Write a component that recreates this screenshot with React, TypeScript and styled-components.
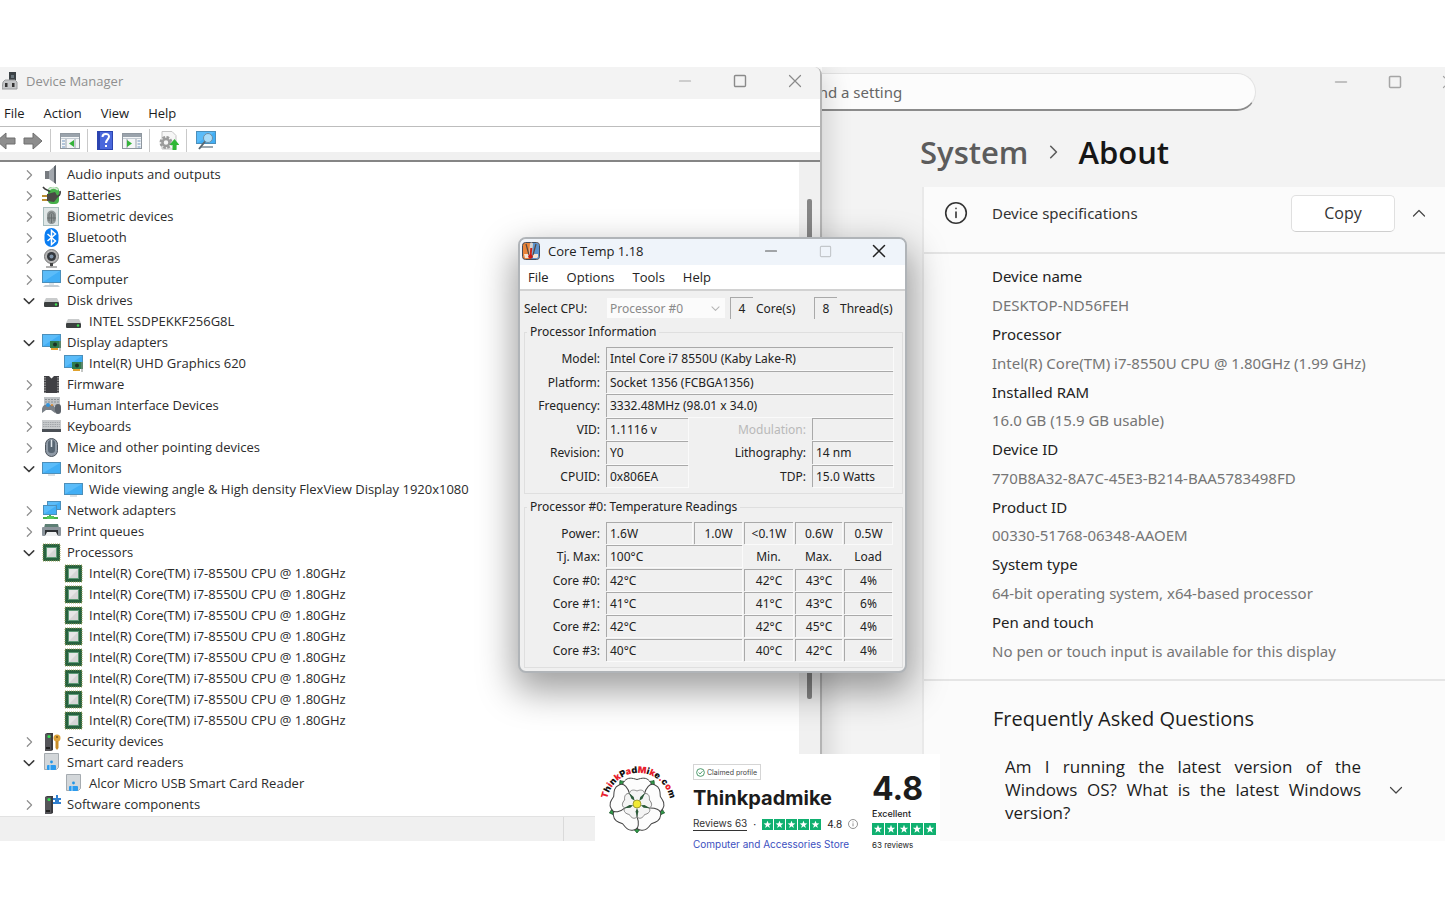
import React from "react";
import styled, { createGlobalStyle } from "styled-components";

const ui = `"Open Sans", "Noto Sans", sans-serif`;
const dialogFont = `"Noto Sans", "Open Sans", sans-serif`;
const brandFont = `Inter, "Liberation Sans", sans-serif`;

const GlobalStyle = createGlobalStyle`
  * { box-sizing: border-box; }
  body { margin: 0; background: #fff; color: #222; font-family: ${ui}; }
  button, input, select { font: inherit; color: inherit; }
  button { border: 0; padding: 0; background: none; cursor: pointer; }
  ul, dl, dd, h1, h2, h3, p, fieldset { margin: 0; padding: 0; border: 0; }
  ul { list-style: none; }
  svg { display: block; flex: none; }
`;

const Desktop = styled.main`
  position: relative;
  display: grid;
  grid-template-columns: 822fr 623fr;
  margin-top: 67px;
  padding-bottom: 67px;
`;

/* ---------- Device Manager ---------- */

const ManagerWindow = styled.section`
  position: relative;
  z-index: 1;
  display: flex;
  flex-direction: column;
  min-width: 0;
  background: #f0f0f0;
  border-right: 2px solid #b4b4b4;
  border-top-right-radius: 8px;
  box-shadow: 6px 4px 26px rgba(0, 0, 0, 0.14);
  clip-path: inset(0 -60px 0 0);
`;

const ManagerTitle = styled.header`
  display: flex;
  align-items: center;
  height: 32px;
  padding: 0 0 4px 2px;
  background: #f3f3f3;
  border-top-right-radius: 6px;
  color: #8f8f8f;
`;

const ManagerName = styled.h1`
  flex: 1;
  margin-left: 8px;
  font-size: 13px;
  font-weight: 400;
  line-height: 20px;
`;

const WindowButtons = styled.div<{ $gap: number; $end: number }>`
  display: flex;
  gap: ${(p) => p.$gap}px;
  margin-right: ${(p) => p.$end}px;
`;

const WindowButton = styled.button`
  display: grid;
  place-items: center;
  width: 16px;
  height: 16px;
`;

const ManagerMenu = styled.nav`
  display: flex;
  gap: 19px;
  height: 28px;
  padding-left: 4px;
  background: #fff;
  border-bottom: 1px solid #bdbdbd;
  font-size: 13px;
  line-height: 28px;
  color: #1c1c1c;
`;

const Toolbar = styled.div`
  display: flex;
  align-items: center;
  gap: 7px;
  height: 25px;
  padding-top: 2px;
  background: #fff;
`;

const ToolButton = styled.button<{ $width?: number }>`
  display: flex;
  align-items: center;
  justify-content: flex-end;
  width: ${(p) => p.$width ?? 20}px;
  height: 22px;
`;

const ToolDivider = styled.span`
  width: 1px;
  height: 23px;
  background: #c9c9c9;
`;

const ToolEdge = styled.div`
  height: 10px;
  background: #f0f0f0;
  border-bottom: 2px solid #858585;
`;

const TreeArea = styled.div`
  display: flex;
  background: #fff;
`;

const Tree = styled.ul`
  flex: 1;
  min-width: 0;
  padding: 2px 0 1px;
`;

const TreeRow = styled.li<{ $child?: boolean }>`
  display: flex;
  align-items: center;
  height: 21px;
  padding-left: ${(p) => (p.$child ? 64 : 22)}px;
  font-size: 13px;
  line-height: 21px;
  color: #2b2b2b;
  white-space: nowrap;
`;

const Twisty = styled.button`
  display: grid;
  place-items: center;
  width: 14px;
  height: 14px;
  margin-right: 6px;
`;

const TreeText = styled.span`
  margin-left: 5px;
`;

const ScrollTrack = styled.div`
  width: 21px;
  padding: 37px 0 0 8px;
  background: #f0f0f0;
`;

const ScrollThumb = styled.div`
  width: 5px;
  height: 500px;
  border-radius: 2px;
  background: #868686;
`;

const StatusBar = styled.footer`
  display: flex;
  height: 25px;
  border-top: 1px solid #e2e2e2;
  background: #f0f0f0;
`;

const StatusPane = styled.span`
  width: 564px;
  border-right: 1px solid #dadada;
`;

/* ---------- Settings ---------- */

const SettingsWindow = styled.section`
  display: flex;
  flex-direction: column;
  min-width: 0;
  overflow: hidden;
  background: #f3f3f3;
`;

const SettingsTop = styled.header`
  display: flex;
  align-items: flex-start;
  justify-content: space-between;
  padding-top: 6px;
`;

const SearchBox = styled.input`
  width: 494px;
  height: 38px;
  margin-left: -60px;
  padding: 1px 20px 0 44px;
  border: 1px solid #e2e2e2;
  border-bottom: 2px solid #8b8b8b;
  border-radius: 19px;
  background: #fcfcfc;
  font-family: ${dialogFont};
  font-size: 15px;
  &::placeholder { color: #666; opacity: 1; }
`;

const SettingsButtons = styled.div`
  display: flex;
  gap: 38px;
  margin: 1px -12px 0 0;
`;

const Crumbs = styled.h2`
  display: flex;
  align-items: center;
  height: 76px;
  padding: 5px 0 0 98px;
  font-size: 31px;
  font-weight: 600;
  line-height: 40px;
  color: #161616;
`;

const CrumbLink = styled.a`
  color: #5c5c5c;
  text-decoration: none;
`;

const CrumbArrow = styled.span`
  display: grid;
  place-items: center;
  width: 50px;
`;

const Card = styled.div`
  flex: 1;
  margin-left: 100px;
  border-left: 2px solid #e9e9e9;
  background: #fbfbfb;
`;

const CardHead = styled.div`
  display: flex;
  align-items: center;
  height: 67px;
  padding: 0 18px 13px 20px;
  border-bottom: 2px solid #e5e5e5;
  color: #333;
`;

const CardTitle = styled.h3`
  flex: 1;
  margin-left: 24px;
  font-family: ${dialogFont};
  font-size: 15px;
  font-weight: 400;
`;

const CopyButton = styled.button`
  width: 104px;
  height: 37px;
  margin-right: 16px;
  border: 1px solid #e0e0e0;
  border-bottom-color: #cfcfcf;
  border-radius: 5px;
  background: #fff;
  font-size: 16px;
`;

const Specs = styled.dl`
  display: grid;
  grid-auto-rows: 1fr;
  align-items: center;
  height: 403px;
  margin: 8px 0 14px;
  padding-left: 68px;
  font-family: ${dialogFont};
  font-size: 15px;
  line-height: 24px;
`;

const SpecName = styled.dt`
  color: #222;
`;

const SpecValue = styled.dd`
  color: #757575;
`;

const Faq = styled.div`
  padding: 24px 42px 13px 69px;
  border-top: 2px solid #e5e5e5;
  color: #1d1d1d;
`;

const FaqTitle = styled.h3`
  font-size: 20px;
  font-weight: 400;
  line-height: 28px;
`;

const FaqItem = styled.button`
  display: flex;
  align-items: center;
  justify-content: space-between;
  width: 100%;
  margin-top: 22px;
  padding-left: 12px;
`;

const FaqText = styled.span`
  width: 356px;
  font-size: 17px;
  line-height: 23px;
  text-align: justify;
`;

/* ---------- Core Temp ---------- */

const CoreWindow = styled.section`
  position: absolute;
  z-index: 2;
  top: 170px;
  left: 518px;
  width: 389px;
  padding-bottom: 3px;
  overflow: hidden;
  border: 2px solid #b0b4b8;
  border-radius: 8px;
  background: #f0f0f0;
  font-family: ${dialogFont};
  font-size: 12px;
  color: #222;
`;

const CoreShadow = styled.div`
  position: absolute;
  z-index: 1;
  top: 172px;
  left: 520px;
  width: 385px;
  height: 430px;
  border-radius: 8px;
  box-shadow: 0 16px 36px 6px rgba(0, 0, 0, 0.38);
`;

const CoreTitle = styled.header`
  display: flex;
  align-items: center;
  height: 26px;
  padding: 0 0 2px 2px;
  background: #eff4fa;
  font-family: ${ui};
`;

const CoreName = styled.h2`
  flex: 1;
  margin-left: 8px;
  font-size: 13px;
  font-weight: 400;
`;

const CoreMenu = styled.nav`
  display: flex;
  gap: 18px;
  height: 26px;
  padding-left: 8px;
  border-bottom: 2px solid #d2d2d2;
  background: #fff;
  font-family: ${ui};
  font-size: 13px;
  line-height: 25px;
`;

const CpuRow = styled.div`
  display: flex;
  align-items: center;
  height: 22px;
  margin: 6px 0 0 4px;
`;

const SelectWrap = styled.div`
  display: flex;
  align-items: center;
  width: 118px;
  height: 20px;
  margin: 0 5px 0 auto;
  padding-right: 5px;
  background: #fbfbfb;
`;

const CpuSelect = styled.select`
  flex: 1;
  min-width: 0;
  height: 20px;
  padding: 0 0 0 3px;
  border: 0;
  appearance: none;
  background: transparent;
  color: #8a8a8a;
  opacity: 1;
`;

const Count = styled.output`
  width: 23px;
  height: 22px;
  border: solid #a9a9a9;
  border-width: 1px 0 0 1px;
  line-height: 21px;
  text-align: center;
`;

const CountLabel = styled.span<{ $width: number }>`
  width: ${(p) => p.$width}px;
  padding-left: 3px;
  white-space: nowrap;
`;

const Group = styled.fieldset`
  min-width: 0;
  margin: 4px 2px 0 4px;
  border: 1px solid #dfdfdf;
`;

const GroupName = styled.legend`
  margin-left: 2px;
  padding: 0 3px;
  font-size: 12px;
  line-height: 18px;
`;

const InfoGrid = styled.dl`
  display: grid;
  grid-template-columns: 75px 82px 1fr 81px;
  grid-auto-rows: 1fr;
  column-gap: 6px;
  height: 141px;
  margin: 6px 9px 5px 0;
`;

const InfoLabel = styled.dt<{ $muted?: boolean }>`
  line-height: 23px;
  text-align: right;
  color: ${(p) => (p.$muted ? "#b9b9b9" : "#222")};
`;

const InfoValue = styled.dd<{ $wide?: boolean }>`
  grid-column: ${(p) => (p.$wide ? "span 3" : "span 1")};
  margin-bottom: 1px;
  padding-left: 3px;
  border: solid #a9a9a9;
  border-width: 1px 0 0 1px;
  box-shadow: 1px 1px 0 #fafafa;
  line-height: 21px;
`;

const Readings = styled.table`
  width: 369px;
  height: 140px;
  margin: 6px 0 5px;
  border-collapse: separate;
  border-spacing: 0;
  table-layout: fixed;
`;

const RowName = styled.th`
  padding: 0 6px 0 0;
  font-weight: 400;
  text-align: right;
`;

const ColumnName = styled.th`
  padding: 0 2px 0 0;
  font-weight: 400;
`;

const Cell = styled.td<{ $left?: boolean }>`
  padding: 0 2px 1px 0;
  text-align: ${(p) => (p.$left ? "left" : "center")};
`;

const Sunken = styled.div<{ $left?: boolean }>`
  height: 22px;
  padding-left: ${(p) => (p.$left ? 3 : 0)}px;
  border: solid #a9a9a9;
  border-width: 1px 0 0 1px;
  box-shadow: 1px 1px 0 #fafafa;
  line-height: 22px;
`;

/* ---------- Review badge ---------- */

const Review = styled.aside`
  position: absolute;
  z-index: 3;
  top: 687px;
  left: 595px;
  display: flex;
  width: 345px;
  height: 110px;
  background: #fff;
  font-family: ${brandFont};
  color: #1c1c1c;
`;

const ReviewMain = styled.div`
  display: flex;
  flex-direction: column;
  align-items: flex-start;
  width: 179px;
  margin-left: 8px;
  padding-top: 10px;
`;

const Claimed = styled.span`
  display: flex;
  align-items: center;
  gap: 2px;
  height: 16px;
  padding: 0 3px 0 2px;
  border: 1px solid #d5d5d5;
  font-size: 7px;
  color: #444;
`;

const Shop = styled.h2`
  margin-top: 5px;
  font-size: 20px;
  font-weight: 700;
  line-height: 26px;
`;

const ScoreLine = styled.div`
  display: flex;
  align-items: center;
  gap: 6px;
  height: 18px;
  margin-top: 4px;
  font-size: 10px;
`;

const ReviewLink = styled.a`
  border-bottom: 1px solid #333;
  color: #333;
  line-height: 13px;
  text-decoration: none;
`;

const StoreLink = styled.a`
  margin-top: 4px;
  color: #3c50c0;
  font-size: 10px;
  line-height: 14px;
  text-decoration: none;
  white-space: nowrap;
`;

const ReviewSide = styled.div`
  display: flex;
  flex-direction: column;
  padding-top: 16px;
  font-size: 9px;
  line-height: 12px;
`;

const BigScore = styled.strong`
  font-size: 32px;
  line-height: 38px;
`;

const Verdict = styled.span`
  font-weight: 500;
`;

const SmallNote = styled.span`
  margin-top: 4px;
  font-size: 8px;
`;

const Stars = styled.div<{ $top: number }>`
  display: flex;
  gap: 1px;
  margin-top: ${(p) => p.$top}px;
`;

/* ---------- Drawings ---------- */

type StrokeProps = { d: string; color: string; w?: number; size?: number };

const Stroke = ({ d, color, w = 1.2, size = 14 }: StrokeProps) => (
  <svg width={size} height={size} viewBox="0 0 14 14" fill="none" stroke={color} strokeWidth={w} strokeLinecap="round" strokeLinejoin="round">
    <path d={d} />
  </svg>
);

const MINIMIZE = "M1.5 7h11";
const MAXIMIZE = "M2.5 1.5h9a1 1 0 0 1 1 1v9a1 1 0 0 1-1 1h-9a1 1 0 0 1-1-1v-9a1 1 0 0 1 1-1z";
const CLOSE = "M1.5 1.5l11 11M12.5 1.5l-11 11";
const UP = "M1.5 10L7 4.5 12.5 10";
const DOWN = "M1.5 4.5L7 10l5.5-5.5";
const RIGHT = "M5 2l5 5-5 5";

const Screen = ({ x = 0, y = 0, w = 19, h = 13 }: { x?: number; y?: number; w?: number; h?: number }) => (
  <g>
    <rect x={x} y={y} width={w} height={h} fill="#4c8fba" />
    <rect x={x + 1} y={y + 1} width={w - 2} height={h - 2} fill="#41aef5" />
    <path d={`M${x + 1} ${y + h - 1}V${y + 1}h${w - 2}z`} fill="#5bbcf9" />
  </g>
);

const Tower = () => (
  <g>
    <path d="M3 2l2-1h6v17l-2 1H3z" fill="#3b3b3f" />
    <path d="M3 2h6v17H3z" fill="#55555a" />
    <rect x="4" y="15" width="4" height="2" fill="#222" />
    <circle cx="7" cy="4.5" r="1.6" fill="#37e052" />
  </g>
);

const art: Record<string, React.ReactNode> = {
  audio: (
    <g>
      <path d="M3 6h5v8H3z" fill="#777b80" />
      <path d="M7 6l7-6v19l-7-5z" fill="#a3a8ae" />
      <path d="M12 1.600L14 0v19l-2-1.600z" fill="#5f656c" />
    </g>
  ),
  battery: (
    <g>
      <rect x="6" y="1" width="11" height="17" rx="4" fill="#46b04a" />
      <path d="M7 4c2-3 7-3 9 0" stroke="#cfe9cf" strokeWidth="2" fill="none" />
      <path d="M1 1c3 4 5 2 7 5M18 5c1 5-3 6-6 6" stroke="#3d3d3d" strokeWidth="1.600" fill="none" />
      <path d="M5 8l8-2 3 5-4 5-7-1z" fill="#4a4a46" />
      <path d="M0 10h5M0 14h5" stroke="#b98d2f" strokeWidth="2" />
    </g>
  ),
  finger: (
    <g>
      <rect x="1.500" y="0.500" width="15" height="18" fill="#dfe6e6" stroke="#a7bcbc" />
      <path d="M5 8c0-6 9-6 9 0v4c0 3-2 5-4.500 5S5 15 5 12z" fill="#8f9696" />
      <path d="M7 14V8c0-3 5-3 5 0v6M9.500 7v9M5 11h9" stroke="#5f6767" strokeWidth=".8" fill="none" />
    </g>
  ),
  bluetooth: (
    <g>
      <rect x="2.500" y="0" width="14" height="19" rx="7" fill="#0a7df2" />
      <path d="M5.500 6l8 7-4 3.500V2.500l4 3.500-8 7" fill="none" stroke="#fff" strokeWidth="1.500" />
    </g>
  ),
  camera: (
    <g>
      <path d="M4 18h11M9.500 14v4" stroke="#999" strokeWidth="1.600" />
      <circle cx="9.500" cy="7.500" r="7" fill="#b4b4b4" stroke="#767676" />
      <circle cx="9.500" cy="7.500" r="4.500" fill="#34383d" />
      <circle cx="9.500" cy="7.500" r="2" fill="#7e93a9" />
      <rect x="8" y="14" width="3" height="3" fill="#444" />
    </g>
  ),
  computer: (
    <g>
      <Screen y={0} />
      <path d="M1 17l2-2h13l2 2z" fill="#c3cdd4" />
      <path d="M7 13h5v2H7z" fill="#dbe3e8" />
    </g>
  ),
  disk: (
    <g>
      <path d="M4 7h11l2 4H2z" fill="#c9cbcc" />
      <rect x="2" y="11" width="15" height="5" rx="1" fill="#3c4040" />
      <circle cx="14" cy="13.500" r="1.200" fill="#3de04f" />
    </g>
  ),
  display: (
    <g>
      <Screen y={1} />
      <rect x="8" y="8" width="11" height="7" fill="#2f7d4d" />
      <circle cx="13" cy="11.500" r="2" fill="#1c3326" />
      <path d="M9 15h7v2H9z" fill="#e0a22e" />
      <path d="M18 8v10" stroke="#8a8f8c" />
    </g>
  ),
  firmware: (
    <g>
      <path d="M2 1h5l2.500 2.500L12 1h5v17H2z" fill="#404044" />
      <path d="M3 2v16M16 2v16" stroke="#9c9c9c" strokeWidth="1.500" strokeDasharray="1.500 1" />
    </g>
  ),
  hid: (
    <g>
      <rect x="2" y="1" width="16" height="9" fill="#bfc3c6" />
      <path d="M3 3.500h14M3 6h14" stroke="#8b9094" strokeDasharray="2 1" />
      <path d="M0 17c-1-6 2-9 5-8h5c3 0 4 4 3 8l-4-3H4z" fill="#7a8087" />
      <circle cx="6" cy="9" r="2" fill="#3394dc" />
      <rect x="13" y="8" width="6" height="10" rx="3" fill="#5c626a" />
      <circle cx="10" cy="9" r="1" fill="#e28b2b" />
    </g>
  ),
  keyboard: (
    <g>
      <rect x="0" y="3" width="19" height="9" fill="#c8cbcd" />
      <path d="M1 5.500h17M1 7.500h17M1 9.500h17" stroke="#a2a6aa" strokeDasharray="1.500 .8" />
      <rect x="0" y="12" width="19" height="3" fill="#4a4f55" />
    </g>
  ),
  mouse: (
    <g>
      <rect x="3.500" y="0.500" width="12" height="18" rx="6" fill="#8f9aa6" stroke="#4c545d" />
      <rect x="6" y="2" width="7" height="13" rx="3" fill="#586673" />
      <path d="M9.500 2v7" stroke="#dfe5ea" strokeWidth="1.500" />
    </g>
  ),
  monitor: (
    <g>
      <Screen y={3} h={12} />
      <path d="M6 16h7" stroke="#b9c3c9" />
    </g>
  ),
  network: (
    <g>
      <Screen x={5} y={0} w={14} h={9} />
      <Screen x={1} y={4} w={14} h={10} />
      <path d="M8 14v2M1 17h15" stroke="#46b04a" strokeWidth="2" />
      <path d="M5 15h7v3H5z" fill="#55c658" />
    </g>
  ),
  printer: (
    <g>
      <path d="M3 2h13l1 4H2z" fill="#5d7f74" />
      <rect x="0" y="5" width="19" height="9" rx="1" fill="#8c959c" />
      <rect x="3" y="8" width="13" height="5" fill="#2c3033" />
      <path d="M5 10h9l2 4H3z" fill="#eef0f1" />
    </g>
  ),
  cpu: (
    <g>
      <rect x="1" y="1" width="17" height="17" fill="#27623f" stroke="#a0a35e" strokeDasharray="1 1" />
      <rect x="4.500" y="4.500" width="10" height="10" fill="#e6e6e6" stroke="#5e9a76" />
      <path d="M5 14L14 5v9z" fill="#d6d6d6" />
    </g>
  ),
  security: (
    <g>
      <Tower />
      <circle cx="15" cy="6" r="3.500" fill="#dca23a" />
      <path d="M13.500 9h3v7l-1.500 2-1.500-2z" fill="#c98d27" />
      <circle cx="15" cy="5" r="1" fill="#7c5515" />
    </g>
  ),
  card: (
    <g>
      <path d="M2.500 .5h14v14l-2 2h-12z" fill="#d3d7da" stroke="#a5abb0" />
      <circle cx="9.500" cy="9" r="1.400" fill="#2196e8" />
      <rect x="5" y="12" width="9" height="5" rx="1" fill="#2b9bee" />
      <path d="M8 12v5" stroke="#bfe1fa" />
    </g>
  ),
  software: (
    <g>
      <Tower />
      <path d="M11 3h3V0h2v3h3v2h-2v2h2v2h-8V7h2V5h-2z" fill="#2f7fd0" />
    </g>
  ),
};

const TreeIcon = ({ name }: { name: string }) => (
  <svg width="20" height="19" viewBox="0 0 20 19" aria-hidden="true">{art[name]}</svg>
);

const Arrow = ({ flip }: { flip?: boolean }) => (
  <svg width="20" height="18" viewBox="0 0 20 18">
    <path d={flip ? "M19 6H10V1L1 9l9 8v-5h9z" : "M1 6h9V1l9 8-9 8v-5H1z"} fill="#8d8d8d" stroke="#6f6f6f" />
  </svg>
);

const PaneIcon = ({ right }: { right?: boolean }) => (
  <svg width="20" height="18" viewBox="0 0 20 18">
    <rect x=".5" y="1.500" width="19" height="15" fill="#f4f6f7" stroke="#8f979f" />
    <path d="M1 3.500h18" stroke="#9aa3ac" strokeWidth="3" />
    <path d="M1 6.500h18" stroke="#c2cad2" />
    {right ? (
      <g>
        <path d="M5 7v9M14 7v9" stroke="#9aa3ac" />
        <path d="M15.500 9h3M15.500 12h3M15.500 15h3" stroke="#6f93bd" />
        <path d="M5 8l5 3.500L5 15z" fill="#35b33a" />
      </g>
    ) : (
      <g>
        <path d="M6 7v9M15 7v9" stroke="#9aa3ac" />
        <path d="M2 9h3M2 12h3M2 15h3" stroke="#6f93bd" />
        <path d="M14 8l-5 3.500 5 3.500z" fill="#35b33a" />
      </g>
    )}
  </svg>
);

const HelpIcon = () => (
  <svg width="18" height="20" viewBox="0 0 18 20">
    <rect width="16" height="19" fill="#2b44b0" />
    <rect x="3" y="1" width="12" height="17" fill="#4a68dc" />
    <path d="M5.500 6c0-4 6.500-4 6.500-.5C12 8.500 9 8.500 9 12M9 14v2" fill="none" stroke="#fff" strokeWidth="2" />
  </svg>
);

const UpdateIcon = () => (
  <svg width="20" height="20" viewBox="0 0 20 20">
    <path d="M3 .5h10l4 4V18H3z" fill="#f6f6f6" stroke="#c4c4c4" />
    <circle cx="7" cy="11.500" r="5" fill="none" stroke="#9b9b9b" strokeWidth="3" strokeDasharray="2.600 1.300" />
    <circle cx="7" cy="11.500" r="3.500" fill="none" stroke="#9b9b9b" strokeWidth="2.500" />
    <path d="M15.500 8l5 6h-3v5h-4v-5h-3z" fill="#2fb735" />
  </svg>
);

const ScanIcon = () => (
  <svg width="20" height="19" viewBox="0 0 20 19">
    <Screen w={20} h={13} />
    <path d="M4 16h13" stroke="#9ba7af" strokeWidth="2" />
    <circle cx="12" cy="7" r="4.500" fill="#a9dcf8" stroke="#6f8ea3" />
    <path d="M9 10.500L3 18" stroke="#5a6770" strokeWidth="2" />
  </svg>
);

const ManagerIcon = () => (
  <svg width="16" height="18" viewBox="0 0 16 18">
    <rect x="7" y="0" width="7" height="9" fill="#3c4246" />
    <rect x="9" y="3" width="3" height="3" fill="#69757c" />
    <path d="M1 10l2-2h10l2 2v7H0z" fill="#c4c6c8" stroke="#9a9c9e" />
    <rect x="3" y="11" width="2.500" height="4" fill="#333" />
    <rect x="10" y="11" width="2.500" height="4" fill="#333" />
  </svg>
);

const CoreIcon = () => (
  <svg width="18" height="18" viewBox="0 0 18 18">
    <rect x=".5" y=".5" width="17" height="17" rx="3" fill="#e8843a" stroke="#444b59" />
    <path d="M9 1h6a2 2 0 0 1 2 2v12a2 2 0 0 1-2 2H9z" fill="#5b93cf" />
    <path d="M2 12h5v4H3zM11 12h5v3l-1 1h-4z" fill="#f4e3d3" />
    <path d="M4 2l3 11M14 2l-3 11" stroke="#59493f" strokeWidth="1.200" />
    <path d="M9.500 2l-1 11" stroke="#d5d2cf" strokeWidth="3" strokeLinecap="round" />
    <path d="M9.300 6l-.8 8" stroke="#cc2218" strokeWidth="2" />
    <circle cx="8.500" cy="14.500" r="2.300" fill="#c81c14" />
  </svg>
);

const StarRow = ({ size, top = 0 }: { size: number; top?: number }) => (
  <Stars $top={top} role="img" aria-label="Rated 4.8 out of 5">
    {[0, 1, 2, 3, 4].map((n) => (
      <svg key={n} width={size} height={size} viewBox="0 0 12 12">
        <rect width="12" height="12" fill="#10b070" />
        <path d="M6 1.800l1.100 2.900 3.100.1-2.500 1.900.9 3L6 8l-2.600 1.700.9-3L1.800 4.800l3.100-.1z" fill="#fff" />
      </svg>
    ))}
  </Stars>
);

const RoseLogo = () => {
  const petals = [0, 72, 144, 216, 288];
  const letters = "ThinkPadMike.com".split("");
  return (
    <svg width="90" height="84" viewBox="-5 0 90 84" role="img" aria-label="ThinkPadMike.com">
      <g transform="translate(37 50)">
        {petals.map((a) => (
          <path key={a} transform={`rotate(${a + 36})`} d="M0 -29C2 -26 6 -24 5 -20L0 -13L-5 -20C-6 -24 -2 -26 0 -29z" fill="#2f9c48" stroke="#1d5a2c" strokeWidth=".8" />
        ))}
        {petals.map((a) => (
          <path key={a} transform={`rotate(${a})`} d="M-7 -10C-12 -13 -17 -19 -12.500 -23C-9 -27 -5 -26 0 -24.500C5 -26 9 -27 12.500 -23C17 -19 12 -13 7 -10z" fill="#fdfdfd" stroke="#444" strokeWidth="1" />
        ))}
        {petals.map((a) => (
          <path key={a} transform={`rotate(${a})`} d="M-7.500 -10.500C-7 -14.500 -3 -14.500 0 -13C3 -14.500 7 -14.500 7.500 -10.500L0 0z" fill="#f4f4f4" stroke="#777" strokeWidth=".8" />
        ))}
        <circle r="9.500" fill="#f4f4f4" />
        {petals.map((a) => (
          <path key={a} transform={`rotate(${a + 36})`} d="M0 -13.500L1.400 -7.500L0 -4L-1.400 -7.500z" fill="#2c5b3a" />
        ))}
        <circle r="4" fill="#f1e935" stroke="#8d8a2a" strokeWidth=".8" />
      </g>
      <path id="logo-arc" d="M7.500 43A32 32 0 0 1 69.500 43" fill="none" />
      <text fontFamily={brandFont} fontSize="9" fontWeight="900">
        <textPath href="#logo-arc" startOffset="50%" textAnchor="middle">
          {letters.map((c, i) => (
            <tspan key={i} fill={i % 2 ? "#111" : "#e8202c"}>{c}</tspan>
          ))}
        </textPath>
      </text>
    </svg>
  );
};

/* ---------- Data ---------- */

type Item = { icon: string; text: string; open?: boolean; child?: boolean };

const cpuRows: Item[] = Array.from({ length: 8 }, () => ({
  icon: "cpu",
  text: "Intel(R) Core(TM) i7-8550U CPU @ 1.80GHz",
  child: true,
}));

const items: Item[] = [
  { icon: "audio", text: "Audio inputs and outputs" },
  { icon: "battery", text: "Batteries" },
  { icon: "finger", text: "Biometric devices" },
  { icon: "bluetooth", text: "Bluetooth" },
  { icon: "camera", text: "Cameras" },
  { icon: "computer", text: "Computer" },
  { icon: "disk", text: "Disk drives", open: true },
  { icon: "disk", text: "INTEL SSDPEKKF256G8L", child: true },
  { icon: "display", text: "Display adapters", open: true },
  { icon: "display", text: "Intel(R) UHD Graphics 620", child: true },
  { icon: "firmware", text: "Firmware" },
  { icon: "hid", text: "Human Interface Devices" },
  { icon: "keyboard", text: "Keyboards" },
  { icon: "mouse", text: "Mice and other pointing devices" },
  { icon: "monitor", text: "Monitors", open: true },
  { icon: "monitor", text: "Wide viewing angle & High density FlexView Display 1920x1080", child: true },
  { icon: "network", text: "Network adapters" },
  { icon: "printer", text: "Print queues" },
  { icon: "cpu", text: "Processors", open: true },
  ...cpuRows,
  { icon: "security", text: "Security devices" },
  { icon: "card", text: "Smart card readers", open: true },
  { icon: "card", text: "Alcor Micro USB Smart Card Reader", child: true },
  { icon: "software", text: "Software components" },
];

const specs = [
  ["Device name", "DESKTOP-ND56FEH"],
  ["Processor", "Intel(R) Core(TM) i7-8550U CPU @ 1.80GHz (1.99 GHz)"],
  ["Installed RAM", "16.0 GB (15.9 GB usable)"],
  ["Device ID", "770B8A32-8A7C-45E3-B214-BAA5783498FD"],
  ["Product ID", "00330-51768-06348-AAOEM"],
  ["System type", "64-bit operating system, x64-based processor"],
  ["Pen and touch", "No pen or touch input is available for this display"],
];

const cores = [
  ["Core #0:", "42°C", "42°C", "43°C", "4%"],
  ["Core #1:", "41°C", "41°C", "43°C", "6%"],
  ["Core #2:", "42°C", "42°C", "45°C", "4%"],
  ["Core #3:", "40°C", "40°C", "42°C", "4%"],
];

/* ---------- Parts ---------- */

const DeviceManager = () => (
  <ManagerWindow>
    <ManagerTitle>
      <ManagerIcon />
      <ManagerName>Device Manager</ManagerName>
      <WindowButtons $gap={39} $end={17}>
        <WindowButton aria-label="Minimize"><Stroke d={MINIMIZE} color="#a8a8a8" /></WindowButton>
        <WindowButton aria-label="Maximize"><Stroke d={MAXIMIZE} color="#8a8a8a" w={1.4} /></WindowButton>
        <WindowButton aria-label="Close"><Stroke d={CLOSE} color="#8a8a8a" /></WindowButton>
      </WindowButtons>
    </ManagerTitle>
    <ManagerMenu>
      <button>File</button>
      <button>Action</button>
      <button>View</button>
      <button>Help</button>
    </ManagerMenu>
    <Toolbar>
      <ToolButton $width={16} aria-label="Back"><Arrow flip /></ToolButton>
      <ToolButton aria-label="Forward"><Arrow /></ToolButton>
      <ToolDivider />
      <ToolButton $width={22} aria-label="Show console tree"><PaneIcon /></ToolButton>
      <ToolDivider />
      <ToolButton aria-label="Help"><HelpIcon /></ToolButton>
      <ToolButton aria-label="Show action pane"><PaneIcon right /></ToolButton>
      <ToolDivider />
      <ToolButton $width={22} aria-label="Update driver"><UpdateIcon /></ToolButton>
      <ToolDivider />
      <ToolButton $width={22} aria-label="Scan for hardware changes"><ScanIcon /></ToolButton>
    </Toolbar>
    <ToolEdge />
    <TreeArea>
      <Tree>
        {items.map((it, i) => (
          <TreeRow key={i} $child={it.child}>
            {!it.child && (
              <Twisty aria-label={it.text} aria-expanded={!!it.open}>
                <Stroke size={12} d={it.open ? DOWN : RIGHT} color={it.open ? "#3c3c3c" : "#8f8f8f"} w={it.open ? 1.8 : 1.4} />
              </Twisty>
            )}
            <TreeIcon name={it.icon} />
            <TreeText>{it.text}</TreeText>
          </TreeRow>
        ))}
      </Tree>
      <ScrollTrack><ScrollThumb /></ScrollTrack>
    </TreeArea>
    <StatusBar><StatusPane /></StatusBar>
  </ManagerWindow>
);

const Settings = () => (
  <SettingsWindow>
    <SettingsTop>
      <SearchBox type="text" aria-label="Find a setting" placeholder="Find a setting" />
      <SettingsButtons>
        <WindowButton aria-label="Minimize"><Stroke d={MINIMIZE} color="#b0b0b0" w={1.5} /></WindowButton>
        <WindowButton aria-label="Maximize"><Stroke d={MAXIMIZE} color="#a5a5a5" w={1.5} /></WindowButton>
        <WindowButton aria-label="Close"><Stroke d={CLOSE} color="#a5a5a5" /></WindowButton>
      </SettingsButtons>
    </SettingsTop>
    <Crumbs>
      <CrumbLink href="#system">System</CrumbLink>
      <CrumbArrow><Stroke d={RIGHT} color="#5c5c5c" w={1.4} size={16} /></CrumbArrow>
      About
    </Crumbs>
    <Card>
      <CardHead>
        <svg width="24" height="24" viewBox="0 0 24 24" fill="none" stroke="#333" strokeWidth="1.600" strokeLinecap="round">
          <circle cx="12" cy="12" r="10.300" />
          <path d="M12 11v5.500M12 7.400v.2" />
        </svg>
        <CardTitle>Device specifications</CardTitle>
        <CopyButton>Copy</CopyButton>
        <WindowButton aria-label="Collapse"><Stroke d={UP} color="#444" /></WindowButton>
      </CardHead>
      <Specs>
        {specs.map(([name, value]) => (
          <React.Fragment key={name}>
            <SpecName>{name}</SpecName>
            <SpecValue>{value}</SpecValue>
          </React.Fragment>
        ))}
      </Specs>
      <Faq>
        <FaqTitle>Frequently Asked Questions</FaqTitle>
        <FaqItem>
          <FaqText>Am I running the latest version of the Windows OS? What is the latest Windows version?</FaqText>
          <Stroke d={DOWN} color="#444" w={1.2} />
        </FaqItem>
      </Faq>
    </Card>
  </SettingsWindow>
);

const CoreTemp = () => (
  <>
    <CoreShadow />
    <CoreWindow>
      <CoreTitle>
        <CoreIcon />
        <CoreName>Core Temp 1.18</CoreName>
        <WindowButtons $gap={38} $end={18}>
          <WindowButton aria-label="Minimize"><Stroke d={MINIMIZE} color="#555" /></WindowButton>
          <WindowButton aria-label="Maximize" disabled><Stroke d={MAXIMIZE} color="#c3c7cb" size={13} /></WindowButton>
          <WindowButton aria-label="Close"><Stroke d={CLOSE} color="#222" w={1.5} /></WindowButton>
        </WindowButtons>
      </CoreTitle>
      <CoreMenu>
        <button>File</button>
        <button>Options</button>
        <button>Tools</button>
        <button>Help</button>
      </CoreMenu>
      <CpuRow>
        <label htmlFor="cpu">Select CPU:</label>
        <SelectWrap>
          <CpuSelect id="cpu" disabled><option>Processor #0</option></CpuSelect>
          <Stroke d={DOWN} color="#b5b5b5" size={9} w={1.6} />
        </SelectWrap>
        <Count>4</Count>
        <CountLabel $width={61}>Core(s)</CountLabel>
        <Count>8</Count>
        <CountLabel $width={68}>Thread(s)</CountLabel>
      </CpuRow>
      <Group>
        <GroupName>Processor Information</GroupName>
        <InfoGrid>
          <InfoLabel>Model:</InfoLabel>
          <InfoValue $wide>Intel Core i7 8550U (Kaby Lake-R)</InfoValue>
          <InfoLabel>Platform:</InfoLabel>
          <InfoValue $wide>Socket 1356 (FCBGA1356)</InfoValue>
          <InfoLabel>Frequency:</InfoLabel>
          <InfoValue $wide>3332.48MHz (98.01 x 34.0)</InfoValue>
          <InfoLabel>VID:</InfoLabel>
          <InfoValue>1.1116 v</InfoValue>
          <InfoLabel $muted>Modulation:</InfoLabel>
          <InfoValue />
          <InfoLabel>Revision:</InfoLabel>
          <InfoValue>Y0</InfoValue>
          <InfoLabel>Lithography:</InfoLabel>
          <InfoValue>14 nm</InfoValue>
          <InfoLabel>CPUID:</InfoLabel>
          <InfoValue>0x806EA</InfoValue>
          <InfoLabel>TDP:</InfoLabel>
          <InfoValue>15.0 Watts</InfoValue>
        </InfoGrid>
      </Group>
      <Group>
        <GroupName>Processor #0: Temperature Readings</GroupName>
        <Readings>
          <colgroup>
            <col width="81" />
            <col width="88" />
            <col width="50" />
            <col width="51" />
            <col width="49" />
            <col width="50" />
          </colgroup>
          <tbody>
            <tr>
              <RowName scope="row">Power:</RowName>
              <Cell $left><Sunken $left>1.6W</Sunken></Cell>
              {["1.0W", "<0.1W", "0.6W", "0.5W"].map((v) => (
                <Cell key={v}><Sunken>{v}</Sunken></Cell>
              ))}
            </tr>
            <tr>
              <RowName scope="row">Tj. Max:</RowName>
              <Cell $left colSpan={2}><Sunken $left>100°C</Sunken></Cell>
              <ColumnName scope="col">Min.</ColumnName>
              <ColumnName scope="col">Max.</ColumnName>
              <ColumnName scope="col">Load</ColumnName>
            </tr>
            {cores.map(([name, now, min, max, load]) => (
              <tr key={name}>
                <RowName scope="row">{name}</RowName>
                <Cell $left colSpan={2}><Sunken $left>{now}</Sunken></Cell>
                <Cell><Sunken>{min}</Sunken></Cell>
                <Cell><Sunken>{max}</Sunken></Cell>
                <Cell><Sunken>{load}</Sunken></Cell>
              </tr>
            ))}
          </tbody>
        </Readings>
      </Group>
    </CoreWindow>
  </>
);

const ReviewBadge = () => (
  <Review>
    <RoseLogo />
    <ReviewMain>
      <Claimed>
        <svg width="9" height="9" viewBox="0 0 10 10" fill="none" stroke="#3b8f5c">
          <circle cx="5" cy="5" r="4.300" />
          <path d="M3 5l1.500 1.600L7.200 3.600" />
        </svg>
        Claimed profile
      </Claimed>
      <Shop>Thinkpadmike</Shop>
      <ScoreLine>
        <ReviewLink href="#reviews">Reviews 63</ReviewLink>
        <span>·</span>
        <StarRow size={11} />
        <span>4.8</span>
        <svg width="10" height="10" viewBox="0 0 10 10" fill="none" stroke="#777" strokeWidth=".8">
          <circle cx="5" cy="5" r="4.500" />
          <path d="M5 4.300v3M5 2.400v1" />
        </svg>
      </ScoreLine>
      <StoreLink href="#store">Computer and Accessories Store</StoreLink>
    </ReviewMain>
    <ReviewSide>
      <BigScore>4.8</BigScore>
      <Verdict>Excellent</Verdict>
      <StarRow size={12} top={3} />
      <SmallNote>63 reviews</SmallNote>
    </ReviewSide>
  </Review>
);

export default function App() {
  return (
    <>
      <GlobalStyle />
      <Desktop>
        <DeviceManager />
        <Settings />
        <CoreTemp />
        <ReviewBadge />
      </Desktop>
    </>
  );
}
